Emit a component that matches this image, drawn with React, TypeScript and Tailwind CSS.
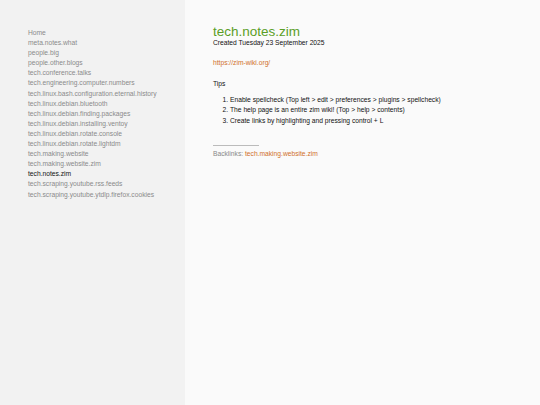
const pages = [
  "Home",
  "meta.notes.what",
  "people.big",
  "people.other.blogs",
  "tech.conference.talks",
  "tech.engineering.computer.numbers",
  "tech.linux.bash.configuration.eternal.history",
  "tech.linux.debian.bluetooth",
  "tech.linux.debian.finding.packages",
  "tech.linux.debian.installing.ventoy",
  "tech.linux.debian.rotate.console",
  "tech.linux.debian.rotate.lightdm",
  "tech.making.website",
  "tech.making.website.zim",
  "tech.notes.zim",
  "tech.scraping.youtube.rss.feeds",
  "tech.scraping.youtube.ytdlp.firefox.cookies",
];

const current = "tech.notes.zim";

export default function App() {
  return (
    <div className="flex h-[405px] w-[540px] font-['Liberation_Sans',Arial,sans-serif] bg-[#fafafa]">
      {/* Sidebar index */}
      <nav className="w-[185px] shrink-0 bg-[#f2f2f2] pl-[28px] pt-[28px]">
        <ul className="flex flex-col">
          {pages.map((p) => (
            <li
              key={p}
              className={`text-[6.7px] leading-[10.1px] ${
                p === current ? "text-[#111]" : "text-[#8a8a8a]"
              }`}
            >
              {p}
            </li>
          ))}
        </ul>
      </nav>

      {/* Page content */}
      <main className="flex-1 pl-[28px] pt-[26px]">
        <h1 className="text-[13.5px] leading-[12px] text-[#5a9e26]">tech.notes.zim</h1>
        <p className="text-[6.7px] leading-[9px] text-[#111]">Created Tuesday 23 September 2025</p>

        <a className="mt-[11px] block text-[6.7px] leading-[9px] text-[#d0702a]">https://zim-wiki.org/</a>

        <p className="mt-[12px] text-[6.7px] leading-[9px] text-[#111]">Tips</p>

        <ol className="mt-[7px] list-decimal pl-[17px] text-[6.7px] leading-[10.4px] text-[#111]">
          <li>Enable spellcheck (Top left &gt; edit &gt; preferences &gt; plugins &gt; spellcheck)</li>
          <li>The help page is an entire zim wiki! (Top &gt; help &gt; contents)</li>
          <li>Create links by highlighting and pressing control + L</li>
        </ol>

        <div className="mt-[19px] h-px w-[46px] bg-[#bbb]" />
        <p className="mt-[3px] text-[6.7px] leading-[9px] text-[#888]">
          Backlinks: <span className="text-[#d0702a]">tech.making.website.zim</span>
        </p>
      </main>
    </div>
  );
}
